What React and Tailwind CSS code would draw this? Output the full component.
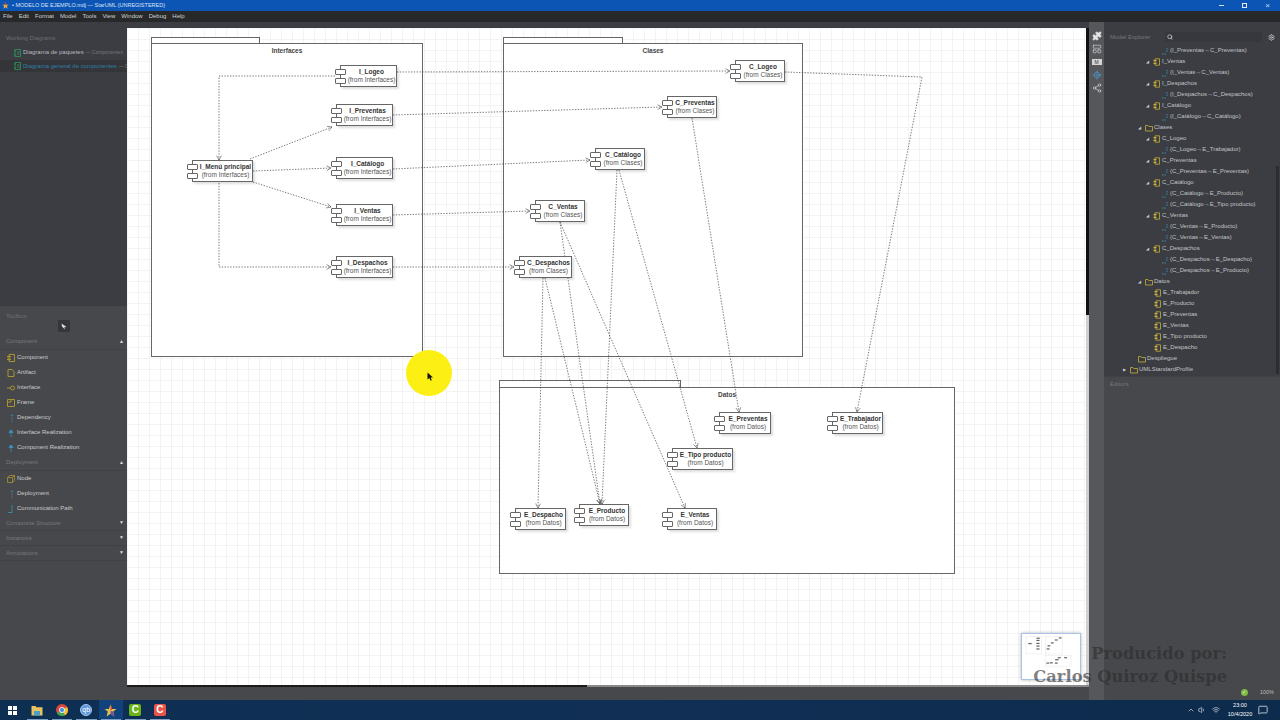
import React from 'react';
import { Search, Settings, Share2, LocateFixed, Puzzle, LayoutPanelTop, MessageSquare, ChevronUp, Volume1, Wifi } from 'lucide-react';

// page coords of everything on the diagram, the canvas starts at (127, 28)
const OX = 127;
const OY = 28;

const frames = [
  { name: 'Interfaces', x: 151, y: 43, w: 272, h: 313, tab: 109, tabH: 6 },
  { name: 'Clases', x: 503, y: 43, w: 300, h: 313, tab: 120, tabH: 6 },
  { name: 'Datos', x: 499, y: 387, w: 456, h: 186, tab: 182, tabH: 7 },
];

const nodes = [
  { name: 'I_Logeo', from: 'Interfaces', x: 340, y: 65, w: 57 },
  { name: 'I_Preventas', from: 'Interfaces', x: 336, y: 104, w: 57 },
  { name: 'I_Catálogo', from: 'Interfaces', x: 336, y: 157, w: 57 },
  { name: 'I_Ventas', from: 'Interfaces', x: 336, y: 204, w: 57 },
  { name: 'I_Despachos', from: 'Interfaces', x: 336, y: 256, w: 57 },
  { name: 'I_Menú principal', from: 'Interfaces', x: 192, y: 160, w: 61 },
  { name: 'C_Logeo', from: 'Clases', x: 735, y: 60, w: 50 },
  { name: 'C_Preventas', from: 'Clases', x: 667, y: 96, w: 50 },
  { name: 'C_Catálogo', from: 'Clases', x: 595, y: 148, w: 50 },
  { name: 'C_Ventas', from: 'Clases', x: 535, y: 200, w: 50 },
  { name: 'C_Despachos', from: 'Clases', x: 519, y: 256, w: 53 },
  { name: 'E_Preventas', from: 'Datos', x: 719, y: 412, w: 52 },
  { name: 'E_Trabajador', from: 'Datos', x: 832, y: 412, w: 51 },
  { name: 'E_Tipo producto', from: 'Datos', x: 672, y: 448, w: 61 },
  { name: 'E_Despacho', from: 'Datos', x: 515, y: 508, w: 51 },
  { name: 'E_Producto', from: 'Datos', x: 579, y: 504, w: 50 },
  { name: 'E_Ventas', from: 'Datos', x: 667, y: 508, w: 50 },
];

const edges = [
  [[335, 76], [219, 76], [219, 160]],
  [[250, 159], [332, 127]],
  [[253, 171], [331, 168]],
  [[253, 182], [331, 207]],
  [[219, 183], [219, 267], [331, 267]],
  [[397, 72], [730, 71]],
  [[393, 115], [662, 107]],
  [[393, 169], [590, 160]],
  [[393, 215], [530, 211]],
  [[393, 267], [514, 267]],
  [[785, 72], [922, 77], [857, 412]],
  [[692, 118], [739, 412]],
  [[619, 170], [697, 448]],
  [[617, 170], [602, 504]],
  [[560, 222], [600, 504]],
  [[560, 222], [685, 508]],
  [[543, 278], [538, 508]],
  [[545, 278], [600, 504]],
];

const arrowHead = (pts) => {
  const [x2, y2] = pts[pts.length - 1];
  const [x1, y1] = pts[pts.length - 2];
  const a = Math.atan2(y2 - y1, x2 - x1);
  const p = (d) => `${x2 - 5 * Math.cos(a + d)},${y2 - 5 * Math.sin(a + d)}`;
  return `${p(0.5)} ${x2},${y2} ${p(-0.5)}`;
};

const tree = [
  { t: '(I_Preventas→C_Preventas)', k: 'link', l: 'pl-[66px]' },
  { t: 'I_Ventas', k: 'comp', l: 'pl-[49px]', c: true },
  { t: '(I_Ventas→C_Ventas)', k: 'link', l: 'pl-[66px]' },
  { t: 'I_Despachos', k: 'comp', l: 'pl-[49px]', c: true },
  { t: '(I_Despachos→C_Despachos)', k: 'link', l: 'pl-[66px]' },
  { t: 'I_Catálogo', k: 'comp', l: 'pl-[49px]', c: true },
  { t: '(I_Catálogo→C_Catálogo)', k: 'link', l: 'pl-[66px]' },
  { t: 'Clases', k: 'folder', l: 'pl-[41px]', c: true },
  { t: 'C_Logeo', k: 'comp', l: 'pl-[49px]', c: true },
  { t: '(C_Logeo→E_Trabajador)', k: 'link', l: 'pl-[66px]' },
  { t: 'C_Preventas', k: 'comp', l: 'pl-[49px]', c: true },
  { t: '(C_Preventas→E_Preventas)', k: 'link', l: 'pl-[66px]' },
  { t: 'C_Catálogo', k: 'comp', l: 'pl-[49px]', c: true },
  { t: '(C_Catálogo→E_Producto)', k: 'link', l: 'pl-[66px]' },
  { t: '(C_Catálogo→E_Tipo producto)', k: 'link', l: 'pl-[66px]' },
  { t: 'C_Ventas', k: 'comp', l: 'pl-[49px]', c: true },
  { t: '(C_Ventas→E_Producto)', k: 'link', l: 'pl-[66px]' },
  { t: '(C_Ventas→E_Ventas)', k: 'link', l: 'pl-[66px]' },
  { t: 'C_Despachos', k: 'comp', l: 'pl-[49px]', c: true },
  { t: '(C_Despachos→E_Despacho)', k: 'link', l: 'pl-[66px]' },
  { t: '(C_Despachos→E_Producto)', k: 'link', l: 'pl-[66px]' },
  { t: 'Datos', k: 'folder', l: 'pl-[41px]', c: true },
  { t: 'E_Trabajador', k: 'comp', l: 'pl-[50px]' },
  { t: 'E_Producto', k: 'comp', l: 'pl-[50px]' },
  { t: 'E_Preventas', k: 'comp', l: 'pl-[50px]' },
  { t: 'E_Ventas', k: 'comp', l: 'pl-[50px]' },
  { t: 'E_Tipo producto', k: 'comp', l: 'pl-[50px]' },
  { t: 'E_Despacho', k: 'comp', l: 'pl-[50px]' },
  { t: 'Despliegue', k: 'folder', l: 'pl-[34px]' },
  { t: 'UMLStandardProfile', k: 'folder', l: 'pl-[26px]', c: true, closed: true },
];

const TreeIcon = ({ kind }) => {
  if (kind === 'link') {
    return (
      <svg width="8" height="8" viewBox="0 0 8 8" className="mr-[1px] -ml-[9px] shrink-0">
        <path d="M1 7 H5 M6 1 V5" stroke="#3b8fb5" strokeWidth="1" fill="none" strokeDasharray="1 0.6" />
      </svg>
    );
  }
  if (kind === 'folder') {
    return (
      <svg width="8" height="8" viewBox="0 0 8 8" className="mr-[1px] shrink-0">
        <path d="M0.5 1.5 H3 L3.7 2.5 H7.5 V7 H0.5 Z" stroke="#b7a136" strokeWidth="0.9" fill="none" />
      </svg>
    );
  }
  return (
    <svg width="7" height="8" viewBox="0 0 7 8" className="mr-[2px] shrink-0">
      <path d="M2 0.8 H6.5 V7.2 H2 Z" stroke="#b7a136" strokeWidth="0.9" fill="none" />
      <path d="M0.5 2 H3.5 V3.2 H0.5 Z M0.5 4.8 H3.5 V6 H0.5 Z" fill="#c9b23c" />
    </svg>
  );
};

const ToolIcon = ({ kind }) => {
  const gold = '#a8952f';
  const blue = '#3b8fb5';
  if (kind === 'dep') return <svg width="8" height="8" viewBox="0 0 8 8"><path d="M5 8 V1 M3.8 2 L5 0.5 L6.2 2" stroke={blue} strokeWidth="0.8" fill="none" strokeDasharray="1 0.5" /></svg>;
  if (kind === 'real') return <svg width="8" height="8" viewBox="0 0 8 8"><path d="M3 1 L5 1 L6.5 4 H1.5 Z" fill={blue} /><path d="M4 4 V8" stroke={blue} strokeWidth="0.8" /></svg>;
  if (kind === 'path') return <svg width="8" height="8" viewBox="0 0 8 8"><path d="M5 0 V8 M1 7.5 H5" stroke={blue} strokeWidth="0.8" /></svg>;
  if (kind === 'iface') return <svg width="8" height="8" viewBox="0 0 8 8"><circle cx="5.5" cy="4" r="2" stroke={gold} fill="none" /><path d="M0 4 H3.5" stroke={gold} /></svg>;
  if (kind === 'node') return <svg width="8" height="8" viewBox="0 0 8 8"><path d="M0.5 2.5 L2.5 0.5 H7.5 V5.5 L5.5 7.5 H0.5 Z M0.5 2.5 H5.5 V7.5 M5.5 2.5 L7.5 0.5" stroke={gold} strokeWidth="0.8" fill="none" /></svg>;
  if (kind === 'artifact') return <svg width="8" height="8" viewBox="0 0 8 8"><path d="M1 0.5 H5 L7 2.5 V7.5 H1 Z" stroke={gold} fill="none" /></svg>;
  if (kind === 'frame') return <svg width="8" height="8" viewBox="0 0 8 8"><path d="M0.5 0.5 H7.5 V7.5 H0.5 Z M0.5 3 H4 V0.5" stroke={gold} fill="none" /></svg>;
  return <svg width="8" height="8" viewBox="0 0 8 8"><path d="M2 0.5 H7.5 V7.5 H2 Z" stroke={gold} fill="none" /><path d="M0 2 H4 V3.2 H0 Z M0 4.8 H4 V6 H0 Z" fill={gold} /></svg>;
};

const ToolSection = ({ title, open, items }) => (
  <div>
    <div className={`h-[15px] flex items-center justify-between pl-[6px] pr-[3px] text-[6px] text-[#77787b] ${open ? '' : 'border-b border-[#404145]'}`}>
      <span>{title}</span>
      <span className="text-[5px] text-[#d8d8d8]">{open ? '▲' : '▼'}</span>
    </div>
    {items && (
      <div className="border-t border-[#404145]">
        {items.map(([label, kind]) => (
          <div key={label} className="h-[15px] flex items-center gap-[2px] pl-[7px] text-[6px] text-[#c9cacb]">
            <span className="w-[8px] flex shrink-0"><ToolIcon kind={kind} /></span>
            <span>{label}</span>
          </div>
        ))}
      </div>
    )}
  </div>
);

const UmlNode = ({ n }) => (
  <div
    className="absolute h-[22px] bg-white border border-[#666] shadow-[2px_2px_2px_rgba(0,0,0,0.13)] flex flex-col items-center justify-center pl-[6px] leading-[8px] whitespace-nowrap"
    style={{ left: n.x - OX, top: n.y - OY, width: n.w }}
  >
    <span className="absolute left-[-6px] top-[3px] w-[11px] h-[6px] rounded-[1px] bg-white border border-[#666]" />
    <span className="absolute left-[-6px] top-[12px] w-[11px] h-[6px] rounded-[1px] bg-white border border-[#666]" />
    <span className="text-[6.5px] font-bold text-[#333]">{n.name}</span>
    <span className="text-[6.5px] text-[#555]">(from {n.from})</span>
  </div>
);

const TaskIcon = ({ children, active }) => (
  <div className={`w-[24.5px] h-[20px] flex items-center justify-center relative ${active ? 'bg-[#12427c]' : ''}`}>
    {children}
    <span className="absolute bottom-0 left-[2px] right-[2px] h-[1px] bg-[#7d9fc4]" />
  </div>
);

const App = () => {
  return (
    <div className="relative w-[1280px] h-[720px] overflow-hidden flex flex-col font-['Liberation_Sans',Arial,sans-serif] bg-[#47484b]">
      {/* Title bar */}
      <div className="h-[11px] bg-[#0c55b5] flex items-center justify-between pl-[2px] shrink-0">
        <div className="flex items-center gap-[3px] text-[5.5px] text-[#d5e3f5]">
          <svg width="7" height="7" viewBox="0 0 24 24"><path d="M12 1 L15 9 L23 9 L17 14 L19 23 L12 18 L5 23 L7 14 L1 9 L9 9 Z" fill="#e8b23a" /><path d="M12 1 L15 9 L12 12 L9 9 Z" fill="#d8402f" /></svg>
          <span>• MODELO DE EJEMPLO.mdj — StarUML (UNREGISTERED)</span>
        </div>
        <div className="flex items-center gap-[18px] pr-[10px] text-[#cfe0f5]">
          <span className="w-[5px] h-[1px] bg-[#cfe0f5]" />
          <span className="w-[5px] h-[5px] border border-[#e4eefa]" />
          <span className="text-[8px] leading-[8px]">×</span>
        </div>
      </div>

      {/* Menu bar */}
      <div className="h-[11px] bg-[#27282a] flex items-center gap-[6px] pl-[3px] text-[6px] text-[#cfd0d1] shrink-0">
        {['File', 'Edit', 'Format', 'Model', 'Tools', 'View', 'Window', 'Debug', 'Help'].map((m) => (
          <span key={m}>{m}</span>
        ))}
      </div>

      <div className="flex h-[678px] shrink-0">
        {/* Left column */}
        <div className="w-[127px] shrink-0 flex flex-col overflow-hidden whitespace-nowrap">
          <div className="h-[284px] bg-[#3b3d43] pt-[11px]">
            <div className="h-[10px] pl-[6px] flex items-center text-[6px] text-[#6d6e72]">Working Diagrams</div>
            <div className="h-[15px] mt-[2px] pl-[14px] flex items-center gap-[2px] text-[6px] text-[#b8b9bb]">
              <svg width="7" height="8" viewBox="0 0 7 8" className="shrink-0"><path d="M1 0.5 H6.5 V7.5 H1 Z M0 2 H2 M0 6 H2 M3 3 H5.5 M3 5 H5.5" stroke="#2c9a5a" fill="none" strokeWidth="0.8" /></svg>
              <span>Diagrama de paquetes <span className="text-[#77787b] text-[5px]">— Componentes</span></span>
            </div>
            <div className="h-[12px] pl-[14px] flex items-center gap-[2px] text-[6px] text-[#2f7fa8] bg-[#333539]">
              <svg width="7" height="8" viewBox="0 0 7 8" className="shrink-0"><path d="M1 0.5 H6.5 V7.5 H1 Z M0 2 H2 M0 6 H2 M3 3 H5.5 M3 5 H5.5" stroke="#2c9a5a" fill="none" strokeWidth="0.8" /></svg>
              <span>Diagrama general de componentes <span className="text-[#77787b] text-[5px]">— C</span></span>
            </div>
          </div>
          <div className="flex-1 bg-[#47484c]">
            <div className="h-[14px] pt-[6px] pl-[6px] flex items-center text-[6px] text-[#6f7073]">Toolbox</div>
            <div className="flex justify-center h-[14px]">
              <div className="w-[12px] h-[12px] rounded-[1px] bg-[#35363a] flex items-center justify-center">
                <svg width="6" height="7" viewBox="0 0 6 7"><path d="M0.5 0.5 L5.5 4 L3.2 4.2 L4 6.5 L1 3.5 Z" fill="#ddd" /></svg>
              </div>
            </div>
            <ToolSection
              title="Component"
              open
              items={[
                ['Component', 'comp'],
                ['Artifact', 'artifact'],
                ['Interface', 'iface'],
                ['Frame', 'frame'],
                ['Dependency', 'dep'],
                ['Interface Realization', 'real'],
                ['Component Realization', 'real'],
              ]}
            />
            <ToolSection
              title="Deployment"
              open
              items={[
                ['Node', 'node'],
                ['Deployment', 'dep'],
                ['Communication Path', 'path'],
              ]}
            />
            <ToolSection title="Composite Structure" />
            <ToolSection title="Instances" />
            <ToolSection title="Annotations" />
          </div>
        </div>

        {/* Center: the diagram canvas */}
        <div className="w-[962px] shrink-0 flex flex-col">
          <div className="h-[6px] bg-[#3b3d43]" />
          <div className="h-[657px] flex">
            <div className="relative w-[959px] h-[657px] overflow-hidden bg-white bg-[linear-gradient(#f3f3f3_1px,transparent_1px),linear-gradient(90deg,#f3f3f3_1px,transparent_1px)] bg-[length:11px_11px]">
              {frames.map((f) => (
                <React.Fragment key={f.name}>
                  <div className="absolute bg-white border border-[#666]" style={{ left: f.x - OX, top: f.y - OY - f.tabH, width: f.tab, height: f.tabH + 1 }} />
                  <div className="absolute bg-white border border-[#666] text-center text-[6.5px] font-bold text-[#444] pt-[2px] leading-[10px]" style={{ left: f.x - OX, top: f.y - OY, width: f.w, height: f.h + 1 }}>
                    {f.name}
                  </div>
                </React.Fragment>
              ))}
              <svg className="absolute left-0 top-0" width="959" height="657" viewBox={`${OX} ${OY} 959 657`} fill="none">
                {edges.map((pts, i) => (
                  <g key={i} stroke="#444">
                    <polyline points={pts.map((p) => p.join(',')).join(' ')} strokeWidth="0.7" strokeDasharray="1.4 1.4" />
                    <polyline points={arrowHead(pts)} strokeWidth="0.6" />
                  </g>
                ))}
              </svg>
              {nodes.map((n) => (
                <UmlNode key={n.name} n={n} />
              ))}
              {/* minimap */}
              <div className="absolute left-[894px] top-[605px] w-[60px] h-[47px] bg-white border border-[#a9c4e6] shadow-[0_0_3px_rgba(0,0,0,0.3)]">
                <svg width="58" height="45" viewBox="80 0 1035 803">
                  {frames.map((f) => (
                    <rect key={f.name} x={f.x} y={f.y} width={f.w} height={f.h} fill="none" stroke="#e2e2e2" strokeWidth="8" />
                  ))}
                  {nodes.map((n) => (
                    <rect key={n.name} x={n.x} y={n.y} width={n.w} height="22" fill="#666" />
                  ))}
                </svg>
              </div>
            </div>
            <div className="w-[3px] flex flex-col">
              <div className="h-[287px] bg-[#111]" />
              <div className="flex-1 bg-[#cfcfcf]" />
            </div>
          </div>
          <div className="h-[15px] bg-[#47484b] flex items-start">
            <div className="w-[460px] h-[2px] bg-[#1b1b1b]" />
            <div className="w-[502px] h-[2px] bg-[#8a8a8a]" />
          </div>
        </div>

        {/* Right toolbar */}
        <div className="w-[15px] shrink-0 bg-[#56575a]">
          <div className="flex flex-col items-center pt-[9px] gap-[3px] text-[#e0e0e0]">
            <Puzzle size={10} fill="#e5e5e5" strokeWidth={1} />
            <LayoutPanelTop size={10} strokeWidth={1.5} />
            <div className="w-[10px] h-[6px] my-[2px] border border-[#d5d5d5] bg-[#d5d5d5] text-[5px] leading-[4px] text-center text-[#333]">M</div>
            <LocateFixed size={10} className="text-[#4aa3dc]" strokeWidth={1.5} />
            <Share2 size={10} strokeWidth={1.5} />
          </div>
        </div>

        {/* Right panel */}
        <div className="relative w-[176px] shrink-0 flex flex-col whitespace-nowrap overflow-hidden">
          <div className="h-[354px] bg-[#3b3d43] flex flex-col">
            <div className="h-[16px] mt-[7px] flex items-center shrink-0">
              <span className="pl-[6px] w-[61px] text-[6px] text-[#77787b]">Model Explorer</span>
              <div className="w-[97px] h-[10px] bg-[#36383d] flex items-center pl-[2px]">
                <Search size={6} strokeWidth={3} className="text-[#cfd0d1]" />
              </div>
              <Settings size={7} className="ml-[6px] text-[#cfd0d1]" strokeWidth={2.5} />
            </div>
            <div>
              {tree.map((r) => (
                <div key={r.t} className={`relative h-[11px] flex items-center text-[6px] text-[#c2c3c5] ${r.l}`}>
                  {r.c && <span className="w-[6px] -ml-[9px] mr-[3px] text-[4px] text-[#cfd0d1] text-center">{r.closed ? '▶' : '◢'}</span>}
                  <TreeIcon kind={r.k} />
                  <span>{r.t}</span>
                </div>
              ))}
            </div>
          </div>
          <div className="flex-1 bg-[#47484b] border-t border-[#404145]">
            <div className="h-[14px] pl-[6px] flex items-center text-[6px] text-[#77787b]">Editors</div>
          </div>
          {/* status */}
          <div className="h-[15px] -mt-[15px] flex items-center justify-end pr-[6px] gap-[12px] text-[5.5px] text-[#bdbdbd]">
            <span className="w-[7px] h-[7px] rounded-full bg-[#7fb83f] text-white text-[5px] leading-[7px] text-center">✓</span>
            <span>100%</span>
          </div>
          {/* tree scrollbar */}
          <div className="absolute right-[1px] top-[144px] w-[3px] h-[208px] bg-[#2c2d31]" />
        </div>
      </div>

      {/* Taskbar */}
      <div className="h-[20px] bg-[linear-gradient(90deg,#0d2f52,#112f55_50%,#0d2b4c)] flex items-center justify-between shrink-0">
        <div className="flex items-center">
          <div className="w-[25px] flex justify-center">
            <div className="grid grid-cols-2 gap-[1px] w-[9px] h-[9px]">
              <span className="bg-white" /><span className="bg-white" /><span className="bg-white" /><span className="bg-white" />
            </div>
          </div>
          <TaskIcon>
            <svg width="12" height="11" viewBox="0 0 12 11"><path d="M0.5 1 H4.5 L5.5 2.2 H11.5 V10.5 H0.5 Z" fill="#e9c25f" /><path d="M3 6 H9 V10.5 H3 Z" fill="#4aa0c8" /></svg>
          </TaskIcon>
          <TaskIcon>
            <svg width="12" height="12" viewBox="0 0 24 24"><circle cx="12" cy="12" r="12" fill="#d9483b" /><path d="M12 12 L1.6 18 A12 12 0 0 0 18 22.4 Z" fill="#3ba853" /><path d="M12 12 L18 22.4 A12 12 0 0 0 24 12 L22.4 6 Z" fill="#f2c230" /><circle cx="12" cy="12" r="5.2" fill="#4a8fe0" stroke="#fff" strokeWidth="1.6" /></svg>
          </TaskIcon>
          <TaskIcon>
            <div className="w-[12px] h-[12px] rounded-full bg-[#5d97db] border border-[#a9c9ee] text-[7px] leading-[10px] text-center text-white">qb</div>
          </TaskIcon>
          <TaskIcon active>
            <svg width="13" height="13" viewBox="0 0 24 24"><path d="M12 1 L15 9 L23 9 L17 14 L19 23 L12 18 L5 23 L7 14 L1 9 L9 9 Z" fill="#e8c14a" /><path d="M12 1 L15 9 L12 13 Z" fill="#d8402f" /><path d="M12 13 L17 14 L19 23 L12 18 Z" fill="#7a4fa0" /></svg>
          </TaskIcon>
          <TaskIcon>
            <div className="w-[12px] h-[12px] rounded-[2px] bg-[#6ab417] text-[10px] font-bold leading-[12px] text-center text-white">C</div>
          </TaskIcon>
          <TaskIcon>
            <div className="w-[12px] h-[12px] rounded-[2px] bg-[#e8544a] text-[10px] font-bold leading-[12px] text-center text-white">C</div>
          </TaskIcon>
        </div>
        <div className="flex items-center text-[#d5dde6]">
          <ChevronUp size={8} />
          <Volume1 size={8} className="ml-[3px]" />
          <Wifi size={8} className="ml-[6px]" />
          <div className="w-[32px] ml-[4px] text-center text-[5.5px] leading-[9px] text-white">
            <div>23:00</div>
            <div>10/4/2020</div>
          </div>
          <MessageSquare size={10} className="ml-[2px] mr-[12px]" />
        </div>
      </div>

      {/* Screen recorder highlight around the pointer */}
      <div className="absolute left-[406px] top-[350px] w-[46px] h-[46px] rounded-full bg-[#fbef14] flex items-center justify-center">
        <svg width="7" height="9" viewBox="0 0 7 9" className="mt-[7px] ml-[2px]"><path d="M0.5 0.5 L6 5.5 L3.6 5.6 L4.8 8.2 L3.4 8.6 L2.4 6 L0.5 7.5 Z" fill="#111" /></svg>
      </div>

      {/* Video watermark */}
      <div className="absolute left-[1000px] top-[642px] w-[227px] text-right font-['DejaVu_Serif',serif] font-bold text-[16.3px] leading-[23px] text-[#2a2a2c]/60 whitespace-nowrap">
        <div>Producido por:</div>
        <div>Carlos Quiroz Quispe</div>
      </div>
    </div>
  );
};

export default App;
